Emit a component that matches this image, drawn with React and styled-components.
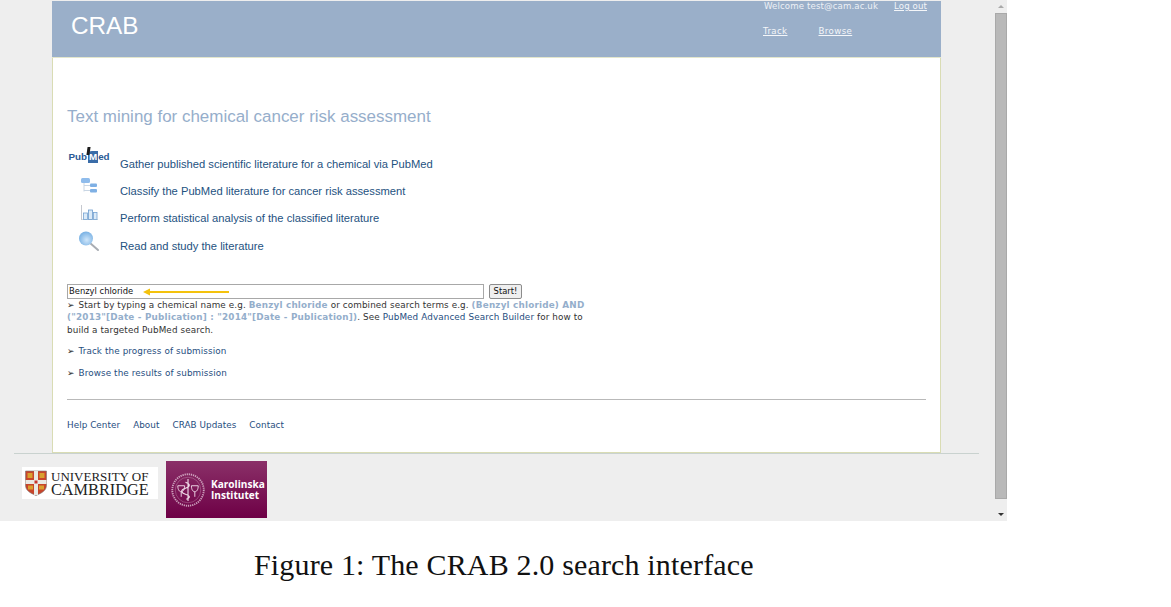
import React from 'react';
import styled, { createGlobalStyle } from 'styled-components';

const GlobalStyle = createGlobalStyle`
  html, body { margin: 0; padding: 0; background: #fff; }
  body { font-family: "Liberation Sans", Arial, sans-serif; overflow: hidden; }
`;

const Page = styled.div`
  width: 1171px;
  height: 607px;
`;
const Shot = styled.div`
  width: 1007px;
  height: 521px;
  display: flex;
  background: #eeeeee;
`;
const Viewport = styled.div`
  flex: 1;
  min-width: 0;
  display: flex;
  flex-direction: column;
`;
const Column = styled.div`
  width: 889px;
  height: 452px;
  margin: 1px 0 0 52px;
  box-sizing: border-box;
  background: #fff;
  border-left: 1px solid #d9dcb4;
  border-right: 1px solid #d9dcb4;
  border-bottom: 1px solid #d9dcb4;
  display: flex;
  flex-direction: column;
`;
const Header = styled.div`
  height: 56px;
  flex: none;
  background: #9aafc9;
  border-bottom: 1px solid #e3e6cc;
  margin: 0 -1px;
  display: flex;
  justify-content: space-between;
  color: #fff;
`;
const Brand = styled.div`
  font-size: 24.3px;
  line-height: 28px;
  margin: 11px 0 0 19px;
`;
const UserArea = styled.div`
  width: 163px;
  margin-right: 14px;
  font: 8.6px/10px "DejaVu Sans", Verdana, sans-serif;
  letter-spacing: 0.12px;
  color: #eef1f6;
`;
const UserRow = styled.div`
  display: flex;
  gap: ${p => p.$gap}px;
  margin-top: ${p => p.$top}px;
  white-space: nowrap;
`;
const TopLink = styled.span`
  text-decoration: underline;
  color: #f4f6f9;
`;
const NavLink = styled(TopLink)`
  letter-spacing: 0.4px;
`;
const NavRow = styled(UserRow)`
  margin-left: -1px;
`;
const Body = styled.div`
  flex: 1;
  padding: 49px 14px 0 14px;
  display: flex;
  flex-direction: column;
`;
const Heading = styled.h1`
  margin: 0;
  font-weight: normal;
  font-size: 16.97px;
  line-height: 20px;
  color: #96aecb;
`;
const Features = styled.div`
  margin-top: 23px;
  display: flex;
  flex-direction: column;
`;
const Feature = styled.div`
  height: 27.4px;
  display: grid;
  grid-template-columns: 53px 1fr;
  align-items: center;
  font-size: 11.2px;
  color: #24527f;
`;
const IconCell = styled.div`
  height: 24px;
  display: flex;
  justify-content: center;
  padding-right: 9px;
  transform: translateY(-4px);
`;
const PubMedMark = styled.div`
  font: bold 9.8px/12px "Liberation Sans", Arial, sans-serif;
  color: #2a5a96;
  padding-top: 3px;
  white-space: nowrap;
  display: flex;
  align-items: flex-start;
  margin: 0 -2px;
`;
const MedBox = styled.span`
  position: relative;
  margin-left: 1px;
  padding: 0 1px;
  background: #3a6ca8;
  border-radius: 4px 0 0 0;
  color: #fff;
  &::before {
    content: '';
    position: absolute;
    left: -1px;
    top: -4px;
    width: 3px;
    height: 8px;
    background: #1c1c1c;
    transform: skewX(-8deg);
  }
`;
const SearchRow = styled.div`
  margin-top: 24px;
  display: flex;
  align-items: center;
  gap: 5px;
`;
const InputBox = styled.div`
  position: relative;
  width: 417px;
  height: 15px;
  box-sizing: border-box;
  border: 1px solid #a8a8a8;
  padding-left: 1px;
  font: 8.4px/13px "DejaVu Sans", Verdana, sans-serif;
  color: #111;
  background: #fff;
`;
const Arrow = styled.svg`
  position: absolute;
  left: 75px;
  top: 2px;
`;
const StartButton = styled.button`
  width: 33px;
  height: 15px;
  padding: 0;
  border: 1px solid #8c8c8c;
  border-radius: 2px;
  background: #efefef;
  font: 8.4px/13px "DejaVu Sans", Verdana, sans-serif;
  color: #111;
`;
const Help = styled.p`
  width: 525px;
  margin: 0;
  font: 8.8px/12.6px "DejaVu Sans", Verdana, sans-serif;
  letter-spacing: 0.11px;
  color: #333;
  padding-top: ${p => p.$top || 0}px;
`;
const Bullet = styled.span`
  display: inline-block;
  width: 11.5px;
  color: #222;
`;
const Sample = styled.b`
  color: #94aecb;
  font-weight: bold;
  letter-spacing: 0.2px;
`;
const TextLink = styled.span`
  color: #1f4e80;
`;
const Rule = styled.hr`
  margin: 19px 0 0;
  border: 0;
  height: 1px;
  background: #b9b9b9;
`;
const FooterLinks = styled.div`
  margin-top: 19px;
  display: flex;
  gap: 13px;
  font: 8.8px/12px "DejaVu Sans", Verdana, sans-serif;
  letter-spacing: 0.06px;
  color: #1f4e80;
`;
const FootLine = styled.div`
  width: 965px;
  height: 1px;
  margin-left: 14px;
  background: #c9d2cf;
`;
const Logos = styled.div`
  margin: 7px 0 0 22px;
  display: flex;
  align-items: flex-start;
  gap: 8px;
`;
const CamLogo = styled.div`
  width: 136px;
  height: 32px;
  margin-top: 6px;
  background: #fff;
  display: flex;
  align-items: center;
  gap: 4px;
  padding-left: 3px;
  box-sizing: border-box;
`;
const CamName = styled.div`
  font-family: "Liberation Serif", "Times New Roman", serif;
  color: #222;
  white-space: nowrap;
`;
const CamLine = styled.div`
  font-size: ${p => p.$size}px;
  line-height: 13.5px;
`;
const KiLogo = styled.div`
  width: 101px;
  height: 57px;
  background: linear-gradient(#8a3068, #6e0046);
  display: flex;
  align-items: center;
  gap: 6px;
  padding-left: 5px;
  box-sizing: border-box;
  color: #fff;
`;
const KiName = styled.div`
  font: bold 10.5px/11px "Open Sans", "Liberation Sans", sans-serif;
  white-space: nowrap;
  transform: scaleX(0.96);
  transform-origin: left center;
`;
const Scrollbar = styled.div`
  width: 12px;
  flex: none;
  display: flex;
  flex-direction: column;
  background: #eeeeee;
`;
const ScrollArrow = styled.div`
  height: 13px;
  flex: none;
  display: flex;
  align-items: center;
  justify-content: center;
  &::before {
    content: '';
    border-left: 3px solid transparent;
    border-right: 3px solid transparent;
    ${p => p.$down ? 'border-top: 3px solid #333;' : 'border-bottom: 3px solid #aaa;'}
  }
`;
const ScrollThumb = styled.div`
  height: 486px;
  flex: none;
  margin-bottom: 9px;
  background: #b9b9b9;
  border: 1px solid #a9a9a9;
  box-sizing: border-box;
`;
const Caption = styled.div`
  width: 1007px;
  margin-top: 27px;
  padding-left: 254px;
  box-sizing: border-box;
  font: 30px/34px "Liberation Serif", "Times New Roman", serif;
  letter-spacing: 0.16px;
  color: #111;
  white-space: nowrap;
`;

const TreeIcon = () => (
  <svg width="20" height="20" viewBox="0 0 20 20">
    <path d="M5 6v10.500M5 10.500h6M5 15.500h6" stroke="#c9d6e4" strokeWidth="1" fill="none" />
    <rect x="2" y="3" width="9" height="5" rx="1.500" fill="#8fbcec" />
    <rect x="11" y="8.500" width="7" height="3.500" rx="1" fill="#7fb0e4" />
    <rect x="11" y="14" width="7" height="3.500" rx="1" fill="#7fb0e4" />
  </svg>
);

const ChartIcon = () => (
  <svg width="20" height="20" viewBox="0 0 20 20">
    <path d="M2.500 3v15" stroke="#c5c8cf" strokeWidth="1" fill="none" />
    <path d="M3 17.500h16" stroke="#d7dadf" strokeWidth="1" fill="none" />
    <rect x="4.500" y="11" width="4" height="6.500" fill="#dcebf8" stroke="#76a3d2" strokeWidth=".8" />
    <rect x="9.500" y="8" width="4" height="9.500" fill="#dcebf8" stroke="#6d9ccd" strokeWidth=".8" />
    <rect x="14.500" y="10.500" width="3.500" height="7" fill="#dcebf8" stroke="#76a3d2" strokeWidth=".8" />
  </svg>
);

const LensIcon = () => (
  <svg width="24" height="22" viewBox="0 0 24 22">
    <defs>
      <radialGradient id="lens" cx="55%" cy="60%" r="70%">
        <stop offset="0" stopColor="#cfe6fa" />
        <stop offset="1" stopColor="#6aa8e0" />
      </radialGradient>
    </defs>
    <path d="M13 13l8 7" stroke="#a9adb3" strokeWidth="2" strokeLinecap="round" />
    <circle cx="9" cy="8.500" r="7" fill="url(#lens)" />
  </svg>
);

const Shield = () => (
  <svg width="22" height="26" viewBox="0 0 22 26">
    <path d="M.5 1h21v14c0 6-5 8-10.500 10.500C5.500 23 .5 21 .5 15z" fill="#c8452b" stroke="#777" strokeWidth=".6" />
    <path d="M9 1h4v24h-4zM.5 10h21v4H.5z" fill="#e9e9e4" />
    <rect x="9.500" y="10.500" width="3" height="3" fill="#c8352b" />
    <rect x="2.500" y="3" width="5" height="5" fill="#d9a02f" />
    <rect x="14.500" y="3" width="5" height="5" fill="#d9a02f" />
    <rect x="3" y="15.500" width="5" height="4" fill="#d9a02f" />
    <rect x="14" y="15.500" width="5" height="4" fill="#d9a02f" />
  </svg>
);

const Seal = () => (
  <svg width="40" height="40" viewBox="0 0 40 40" fill="none" stroke="#f0dce8">
    <circle cx="20" cy="20" r="18.500" strokeWidth="2.200" strokeDasharray="1.500 1" opacity=".7" />
    <circle cx="20" cy="20" r="15" strokeWidth=".5" opacity=".6" />
    <path d="M20 7v26M17 11c6 2 6 5 0 7s-6 5 0 7 6 4 1 6" strokeWidth="1.300" />
    <path d="M8 15h8c0 5-2 7-4 7s-4-2-4-7zM24 15h8c0 5-2 7-4 7s-4-2-4-7zM12 22v6M28 22v6" strokeWidth="1.100" />
  </svg>
);

const features = [
  { text: 'Gather published scientific literature for a chemical via PubMed', icon: <PubMedMark>Pub<MedBox>M</MedBox>ed</PubMedMark> },
  { text: 'Classify the PubMed literature for cancer risk assessment', icon: <TreeIcon /> },
  { text: 'Perform statistical analysis of the classified literature', icon: <ChartIcon /> },
  { text: 'Read and study the literature', icon: <LensIcon /> },
];

export default function App() {
  return (
    <Page>
      <GlobalStyle />
      <Shot>
        <Viewport>
          <Column>
            <Header>
              <Brand>CRAB</Brand>
              <UserArea>
                <UserRow $gap={16} $top={0}>
                  <span>Welcome test@cam.ac.uk</span>
                  <TopLink>Log out</TopLink>
                </UserRow>
                <NavRow $gap={31} $top={15}>
                  <NavLink>Track</NavLink>
                  <NavLink>Browse</NavLink>
                </NavRow>
              </UserArea>
            </Header>
            <Body>
              <Heading>Text mining for chemical cancer risk assessment</Heading>
              <Features>
                {features.map(f => (
                  <Feature key={f.text}>
                    <IconCell>{f.icon}</IconCell>
                    <span>{f.text}</span>
                  </Feature>
                ))}
              </Features>
              <SearchRow>
                <InputBox>
                  Benzyl chloride
                  <Arrow width="86" height="10" viewBox="0 0 86 10">
                    <path d="M5 5h81" stroke="#f4c20d" strokeWidth="2" />
                    <path d="M0 5l7-3.500v7z" fill="#f4c20d" />
                  </Arrow>
                </InputBox>
                <StartButton>Start!</StartButton>
              </SearchRow>
              <Help>
                <Bullet>➢</Bullet>Start by typing a chemical name e.g. <Sample>Benzyl chloride</Sample> or combined search terms e.g. <Sample>(Benzyl chloride) AND ("2013"[Date - Publication] : "2014"[Date - Publication])</Sample>. See <TextLink>PubMed Advanced Search Builder</TextLink> for how to build a targeted PubMed search.
              </Help>
              <Help $top={9}><Bullet>➢</Bullet><TextLink>Track the progress of submission</TextLink></Help>
              <Help $top={9}><Bullet>➢</Bullet><TextLink>Browse the results of submission</TextLink></Help>
              <Rule />
              <FooterLinks>
                <span>Help Center</span>
                <span>About</span>
                <span>CRAB Updates</span>
                <span>Contact</span>
              </FooterLinks>
            </Body>
          </Column>
          <FootLine />
          <Logos>
            <CamLogo>
              <Shield />
              <CamName>
                <CamLine $size={13}>UNIVERSITY OF</CamLine>
                <CamLine $size={16.3}>CAMBRIDGE</CamLine>
              </CamName>
            </CamLogo>
            <KiLogo>
              <Seal />
              <KiName>Karolinska<br />Institutet</KiName>
            </KiLogo>
          </Logos>
        </Viewport>
        <Scrollbar>
          <ScrollArrow />
          <ScrollThumb />
          <ScrollArrow $down />
        </Scrollbar>
      </Shot>
      <Caption>Figure 1: The CRAB 2.0 search interface</Caption>
    </Page>
  );
}
